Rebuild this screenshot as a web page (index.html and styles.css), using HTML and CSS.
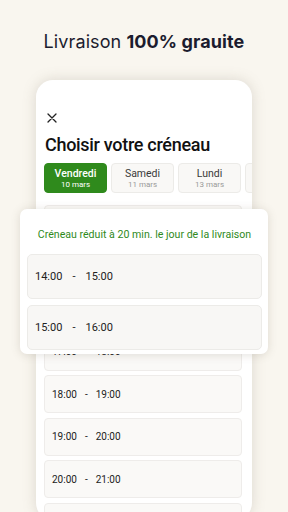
FILE: index.html
```html
<!DOCTYPE html>
<html lang="fr">
<head>
<meta charset="utf-8">
<link rel="stylesheet" href="styles.css">
</head>
<body>
<div class="page">
  <h1 class="headline">Livraison <strong>100% grauite</strong></h1>
  <div class="stage">
    <div class="phone">
      <div class="close">
        <svg width="10" height="10" viewBox="0 0 10 10"><path d="M1 1L9 9M9 1L1 9" stroke="#222" stroke-width="1.3" stroke-linecap="round"/></svg>
      </div>
      <h2 class="title">Choisir votre créneau</h2>
      <div class="days">
        <div class="day active"><span class="day-name">Vendredi</span><span class="day-date">10 mars</span></div>
        <div class="day"><span class="day-name">Samedi</span><span class="day-date">11 mars</span></div>
        <div class="day"><span class="day-name">Lundi</span><span class="day-date">13 mars</span></div>
        <div class="day"><span class="day-name">Mardi</span><span class="day-date">14 mars</span></div>
      </div>
      <div class="slots">
        <div class="slot"><span>14:00</span><span>-</span><span>15:00</span></div>
        <div class="slot"><span>15:00</span><span>-</span><span>16:00</span></div>
        <div class="slot"><span>16:00</span><span>-</span><span>17:00</span></div>
        <div class="slot"><span>17:00</span><span>-</span><span>18:00</span></div>
        <div class="slot"><span>18:00</span><span>-</span><span>19:00</span></div>
        <div class="slot"><span>19:00</span><span>-</span><span>20:00</span></div>
        <div class="slot"><span>20:00</span><span>-</span><span>21:00</span></div>
        <div class="slot"><span>21:00</span><span>-</span><span>22:00</span></div>
      </div>
    </div>
    <div class="popup">
      <p class="notice">Créneau réduit à 20 min. le jour de la livraison</p>
      <div class="pop-slot"><span>14:00</span><span>-</span><span>15:00</span></div>
      <div class="pop-slot"><span>15:00</span><span>-</span><span>16:00</span></div>
    </div>
  </div>
</div>
</body>
</html>
```

FILE: styles.css
```css
* { box-sizing: border-box; }
html, body { margin: 0; padding: 0; }
body {
  width: 288px;
  height: 512px;
  overflow: hidden;
  background: #f9f6ef;
  font-family: Roboto, "Liberation Sans", sans-serif;
}
.page {
  padding-top: 31px;
}
.headline {
  margin: 0;
  font-family: Inter, "Noto Sans", sans-serif;
  font-size: 18px;
  line-height: 22px;
  font-weight: 400;
  color: #1c1c2e;
  text-align: center;
  letter-spacing: 0.1px;
}
.headline strong { font-weight: 700; }
.stage {
  position: relative;
  margin-top: 27px;
  padding: 0 36px;
}
.phone {
  height: 440px;
  background: #fff;
  border-radius: 17px;
  box-shadow: 0 0 14px rgba(120, 110, 90, 0.22);
  overflow: hidden;
  padding: 33px 10px 0 8px;
}
.close {
  height: 10px;
  margin-left: 3px;
  display: flex;
}
.title {
  margin: 11px 0 0 1px;
  font-size: 18px;
  line-height: 22px;
  font-weight: 500;
  letter-spacing: -0.3px;
  color: #111;
}
.days {
  display: flex;
  gap: 4px;
  margin-top: 7px;
  margin-right: -40px;
}
.day {
  flex: 0 0 63px;
  height: 30px;
  border-radius: 4px;
  background: #f9f8f6;
  border: 1px solid #ecebe8;
  display: flex;
  flex-direction: column;
  align-items: center;
  justify-content: center;
  color: #3a3a3a;
}
.day.active {
  background: #2f8a1c;
  border-color: #2f8a1c;
  color: #fff;
}
.day-name {
  font-size: 10.5px;
  line-height: 12px;
}
.day-date {
  font-size: 8px;
  line-height: 9px;
  color: #9a9a9a;
}
.day.active .day-date { color: #fff; }
.day.active .day-name { font-weight: 500; }
.slots {
  margin-top: 12px;
  display: flex;
  flex-direction: column;
  gap: 4.5px;
}
.slot {
  height: 38px;
  border-radius: 4px;
  background: #faf9f7;
  border: 1px solid #eeecea;
  display: flex;
  align-items: center;
  gap: 8px;
  padding-left: 7px;
  font-size: 10px;
  color: #222;
}
.popup {
  position: absolute;
  left: 20px;
  right: 20px;
  top: 129px;
  background: #fff;
  border-radius: 7px;
  box-shadow: 0 1px 10px rgba(100, 90, 70, 0.18);
  padding: 0 6px 4px 7px;
  display: flex;
  flex-direction: column;
  gap: 6px;
}
.notice {
  margin: 0;
  height: 39px;
  padding-top: 20px;
  text-align: center;
  font-size: 10.6px;
  line-height: 12px;
  color: #2f8a1c;
}
.pop-slot {
  height: 45px;
  border-radius: 5px;
  background: #f8f7f5;
  border: 1px solid #ecebe8;
  display: flex;
  align-items: center;
  gap: 10px;
  padding-left: 7px;
  font-size: 11px;
  color: #222;
}
```
